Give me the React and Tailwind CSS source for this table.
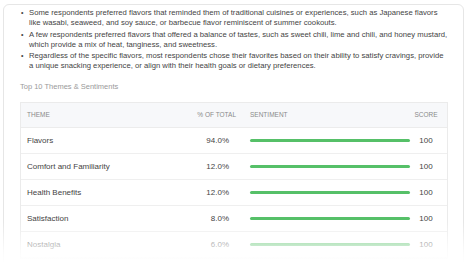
import React from "react";

const bullets = [
  [
    "Some respondents preferred flavors that reminded them of traditional cuisines or experiences, such as Japanese flavors",
    "like wasabi, seaweed, and soy sauce, or barbecue flavor reminiscent of summer cookouts.",
  ],
  [
    "A few respondents preferred flavors that offered a balance of tastes, such as sweet chili, lime and chili, and honey mustard,",
    "which provide a mix of heat, tanginess, and sweetness.",
  ],
  [
    "Regardless of the specific flavors, most respondents chose their favorites based on their ability to satisfy cravings, provide",
    "a unique snacking experience, or align with their health goals or dietary preferences.",
  ],
];

const themes = [
  { name: "Flavors", pct: "94.0%", score: 100 },
  { name: "Comfort and Familiarity", pct: "12.0%", score: 100 },
  { name: "Health Benefits", pct: "12.0%", score: 100 },
  { name: "Satisfaction", pct: "8.0%", score: 100 },
  { name: "Nostalgia", pct: "6.0%", score: 100 },
];

export default function App() {
  return (
    <div className="relative w-[468px] h-[263px] overflow-hidden bg-white font-['Liberation_Sans',Arial,sans-serif]">
      <div className="ml-[3px] mt-[4px] w-[461px] h-[300px] rounded-[6px] border border-[#e6e6e6] pl-[16px] pr-[15px] pt-[3px]">
        <ul className="flex flex-col gap-[1.5px] text-[7.7px] leading-[10px] text-[#444]">
          {bullets.map((lines, i) => (
            <li key={i} className="flex">
              <span className="w-[9px] shrink-0 pl-[1px] text-[7px]">•</span>
              <span className="whitespace-nowrap">
                {lines[0]}
                <br />
                {lines[1]}
              </span>
            </li>
          ))}
        </ul>

        <p className="mt-[11px] text-[7.5px] leading-[10px] text-[#9a9a9a]">Top 10 Themes &amp; Sentiments</p>

        <div className="mt-[10px] w-[428px] border border-[#ebebeb] text-[8px] text-[#444]">
          <div className="flex h-[25px] items-center border-b border-[#ececec] bg-[#f7f8fa] text-[6.5px] text-[#8a8a8a]">
            <div className="w-[150px] pl-[6px]">THEME</div>
            <div className="w-[66px] pr-[1px] text-right">% OF TOTAL</div>
            <div className="w-[173px] pl-[13px]">SENTIMENT</div>
            <div className="w-[32px] text-center">SCORE</div>
          </div>
          {themes.map((t) => (
            <div key={t.name} className="flex h-[26px] items-center border-b border-[#efefef]">
              <div className="w-[150px] pl-[6px]">{t.name}</div>
              <div className="w-[66px] pr-[8px] text-right">{t.pct}</div>
              <div className="w-[173px] pl-[13px]">
                <div className="h-[3px] w-[160px] rounded-full bg-[#56c068]" />
              </div>
              <div className="w-[32px] text-center">{t.score}</div>
            </div>
          ))}
        </div>
      </div>

      <div className="pointer-events-none absolute inset-x-0 top-[222px] bottom-0 bg-linear-to-b from-white/0 from-0% via-white/80 via-70% to-white to-100%" />
    </div>
  );
}
